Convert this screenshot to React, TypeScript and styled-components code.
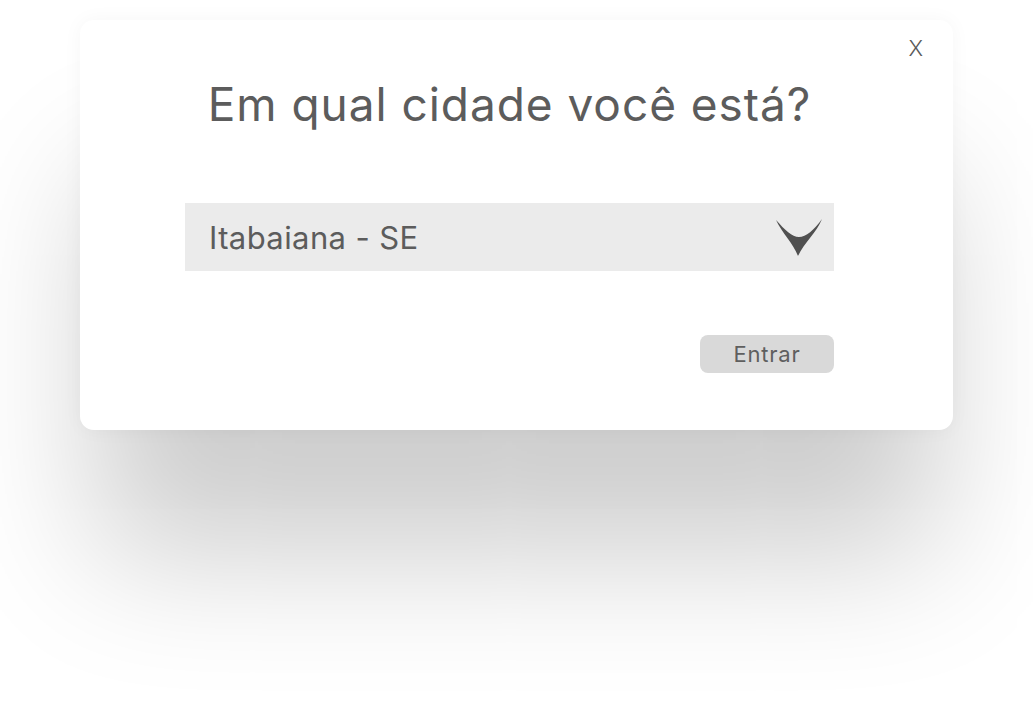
import React from "react";
import styled, { createGlobalStyle } from "styled-components";

const GlobalStyle = createGlobalStyle`
  html, body { margin: 0; padding: 0; background: #ffffff; }
  body { font-family: Inter, "Noto Sans", sans-serif; }
`;

const Page = styled.div`
  padding: 20px 80px 0 80px;
  height: 711px;
  box-sizing: border-box;
  overflow: hidden;
`;

const Card = styled.div`
  position: relative;
  width: 873px;
  height: 410px;
  box-sizing: border-box;
  background: #ffffff;
  border-radius: 14px;
  padding: 61px 119px 0 105px;
  display: flex;
  flex-direction: column;
  box-shadow: 0 0 20px rgba(0, 0, 0, 0.04), 0 140px 140px -15px rgba(0, 0, 0, 0.2);
`;

const Close = styled.button`
  position: absolute;
  top: 17px;
  right: 30px;
  background: none;
  border: none;
  padding: 0;
  font-family: Inter, sans-serif;
  font-weight: 300;
  font-size: 22px;
  line-height: 1;
  color: #5a5a5a;
  cursor: pointer;
`;

const Title = styled.h1`
  margin: 0;
  font-family: Inter, sans-serif;
  font-weight: 400;
  font-size: 46px;
  line-height: 46px;
  letter-spacing: 0.95px;
  color: #5c5c5c;
  text-align: center;
`;

const Select = styled.div`
  margin-top: 76px;
  height: 68px;
  background: #ebebeb;
  display: flex;
  align-items: center;
  justify-content: space-between;
  padding: 0 12px 0 24px;
  box-sizing: border-box;
`;

const SelectText = styled.span`
  font-family: Inter, sans-serif;
  font-size: 31px;
  letter-spacing: 0.4px;
  color: #5c5c5c;
`;

const Arrow = styled.svg`
  width: 46px;
  height: 38px;
  display: block;
  margin-top: 2px;
`;

const Actions = styled.div`
  margin-top: 64px;
  display: flex;
  justify-content: flex-end;
`;

const Button = styled.button`
  width: 134px;
  height: 38px;
  border: none;
  border-radius: 8px;
  background: #d9d9d9;
  font-family: Inter, sans-serif;
  font-size: 22px;
  letter-spacing: 0.8px;
  color: #5f5f5f;
  padding: 0;
  cursor: pointer;
`;

export default function App() {
  return (
    <>
      <GlobalStyle />
      <Page>
        <Card>
          <Close>X</Close>
          <Title>Em qual cidade você está?</Title>
          <Select>
            <SelectText>Itabaiana - SE</SelectText>
            <Arrow viewBox="0 0 46 38">
              <path
                d="M0 1 C9 11 16 18 23 18 C30 18 38 11 46 0 C41 13 28 24 22 37 C17 24 6 14 0 1 Z"
                fill="#505050"
              />
            </Arrow>
          </Select>
          <Actions>
            <Button>Entrar</Button>
          </Actions>
        </Card>
      </Page>
    </>
  );
}
